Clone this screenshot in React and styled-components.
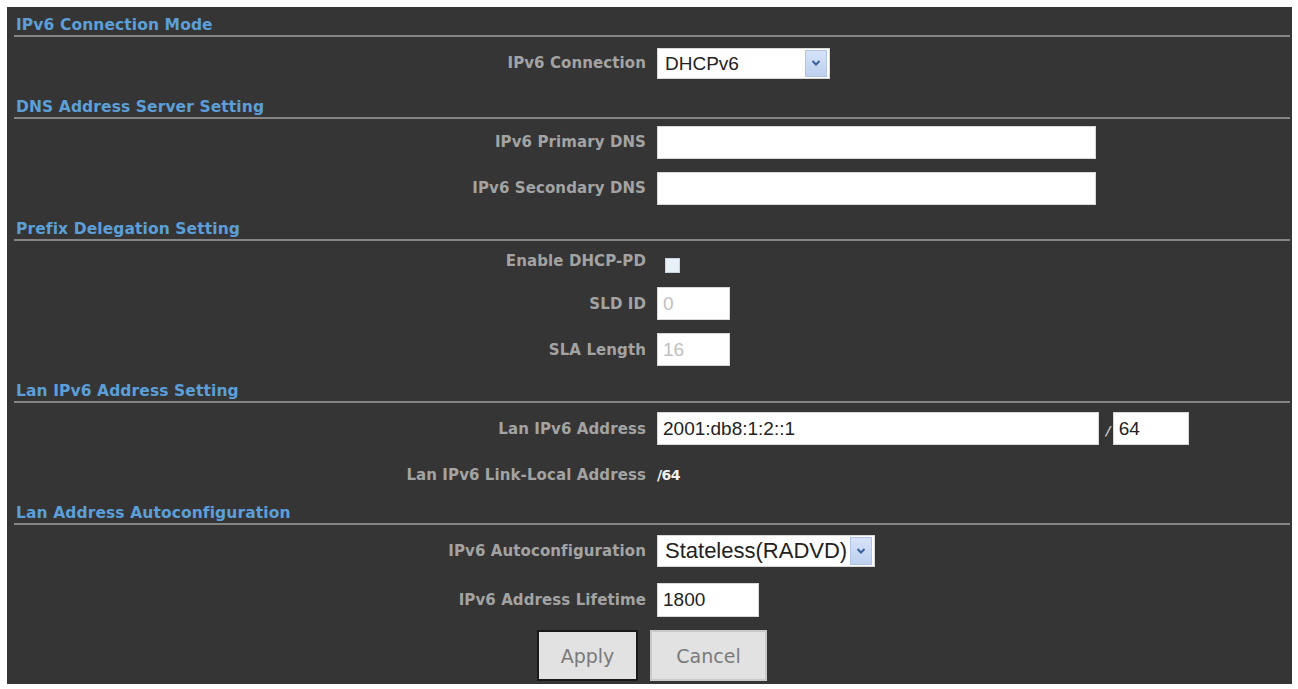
import React, { useState } from 'react';
import styled, { createGlobalStyle } from 'styled-components';

const GlobalStyle = createGlobalStyle`
  body {
    margin: 0;
    background: #ffffff;
    font-family: "DejaVu Sans", Verdana, sans-serif;
  }
`;

const Panel = styled.div`
  margin: 7px 6px 5px 7px;
  height: 677px;
  background-color: #353535;
  box-sizing: border-box;
  display: flex;
  flex-direction: column;
`;

const SectionTitle = styled.div`
  height: 30px;
  margin: 0 2px 0 7px;
  padding: 0 0 1px 2px;
  box-sizing: border-box;
  display: flex;
  align-items: flex-end;
  border-bottom: 2px solid #858585;
  color: #5c9fd8;
  font-weight: bold;
  font-size: 15.5px;
  letter-spacing: 0.1px;
`;

const Row = styled.div`
  display: grid;
  grid-template-columns: 639px auto;
  column-gap: 11px;
  align-items: center;
  height: ${props => props.h}px;
`;

const Label = styled.label`
  text-align: right;
  color: #a3a3a3;
  font-weight: bold;
  font-size: 15px;
  letter-spacing: 0.1px;
`;

const Controls = styled.div`
  display: flex;
  align-items: center;
`;

const TextInput = styled.input`
  width: ${props => props.w}px;
  height: ${props => props.h || 33}px;
  box-sizing: border-box;
  border: 1px solid #d8d8d8;
  background: #ffffff;
  padding: 0 5px;
  font-family: "Liberation Sans", Arial, sans-serif;
  font-size: 19px;
  color: ${props => (props.disabled ? '#c0c0c0' : '#222222')};
  outline: none;
  &:disabled {
    background: #ffffff;
  }
`;

const SelectWrap = styled.div`
  position: relative;
  width: ${props => props.w}px;
  height: ${props => props.h}px;
`;

const Select = styled.select`
  appearance: none;
  width: 100%;
  height: 100%;
  border: 1px solid #d8d8d8;
  background: #ffffff;
  padding: 0 4px 0 7px;
  font-family: "Liberation Sans", Arial, sans-serif;
  font-size: ${props => props.fs}px;
  color: #222222;
  outline: none;
`;

const Arrow = styled.span`
  position: absolute;
  top: 2px;
  right: 3px;
  bottom: 2px;
  width: 22px;
  background: linear-gradient(#d6e3f7, #bdd0ef);
  border: 1px solid #b0c4e6;
  box-sizing: border-box;
  display: flex;
  align-items: center;
  justify-content: center;
  pointer-events: none;
`;

const Checkbox = styled.span`
  display: inline-block;
  width: 15px;
  height: 15px;
  margin: 8px 0 0 8px;
  background: #e9f1f8;
  border: 1px solid #c8d4df;
  box-sizing: border-box;
`;

const Slash = styled.span`
  color: #c8c8c8;
  font-weight: bold;
  font-style: italic;
  font-size: 13px;
  margin: 4px 2px 0 7px;
`;

const Plain = styled.span`
  color: #f0f0f0;
  font-weight: bold;
  font-size: 14px;
  letter-spacing: -0.6px;
`;

const ButtonRow = styled.div`
  display: flex;
  justify-content: center;
  gap: 12px;
  padding-top: 6px;
  margin-left: 5px;
`;

const Button = styled.button`
  width: ${props => props.w}px;
  height: 51px;
  background: #e2e2e2;
  border: 2px solid ${props => (props.focused ? '#1a1a1a' : '#c9c9c9')};
  font-family: "DejaVu Sans", Verdana, sans-serif;
  font-size: 19px;
  color: #7a7a7a;
  cursor: pointer;
`;

const Chevron = () => (
  <svg width="10" height="8" viewBox="0 0 10 8">
    <path d="M1.5 2 L5 5.5 L8.5 2" fill="none" stroke="#3b5e9c" strokeWidth="2" />
  </svg>
);

const App = () => {
  const [conn, setConn] = useState('DHCPv6');
  const [auto, setAuto] = useState('Stateless(RADVD)');

  return (
    <>
      <GlobalStyle />
      <Panel>
        <SectionTitle>IPv6 Connection Mode</SectionTitle>
        <Row h={52}>
          <Label>IPv6 Connection</Label>
          <Controls>
            <SelectWrap w={173} h={31}>
              <Select fs={19} value={conn} onChange={e => setConn(e.target.value)}>
                <option>DHCPv6</option>
                <option>Static IPv6</option>
                <option>PPPoEv6</option>
              </Select>
              <Arrow><Chevron /></Arrow>
            </SelectWrap>
          </Controls>
        </Row>

        <SectionTitle>DNS Address Server Setting</SectionTitle>
        <Row h={46}>
          <Label>IPv6 Primary DNS</Label>
          <Controls><TextInput w={439} defaultValue="" /></Controls>
        </Row>
        <Row h={46}>
          <Label>IPv6 Secondary DNS</Label>
          <Controls><TextInput w={439} defaultValue="" /></Controls>
        </Row>

        <SectionTitle>Prefix Delegation Setting</SectionTitle>
        <Row h={40}>
          <Label>Enable DHCP-PD</Label>
          <Controls><Checkbox /></Controls>
        </Row>
        <Row h={45}>
          <Label>SLD ID</Label>
          <Controls><TextInput w={73} defaultValue="0" disabled /></Controls>
        </Row>
        <Row h={47}>
          <Label>SLA Length</Label>
          <Controls><TextInput w={73} defaultValue="16" disabled /></Controls>
        </Row>

        <SectionTitle>Lan IPv6 Address Setting</SectionTitle>
        <Row h={51}>
          <Label>Lan IPv6 Address</Label>
          <Controls>
            <TextInput w={442} defaultValue="2001:db8:1:2::1" />
            <Slash>/</Slash>
            <TextInput w={76} defaultValue="64" />
          </Controls>
        </Row>
        <Row h={41}>
          <Label>Lan IPv6 Link-Local Address</Label>
          <Controls><Plain>/64</Plain></Controls>
        </Row>

        <SectionTitle>Lan Address Autoconfiguration</SectionTitle>
        <Row h={51}>
          <Label>IPv6 Autoconfiguration</Label>
          <Controls>
            <SelectWrap w={218} h={32}>
              <Select fs={22} value={auto} onChange={e => setAuto(e.target.value)}>
                <option>Stateless(RADVD)</option>
                <option>Stateful(DHCPv6)</option>
              </Select>
              <Arrow><Chevron /></Arrow>
            </SelectWrap>
          </Controls>
        </Row>
        <Row h={48}>
          <Label>IPv6 Address Lifetime</Label>
          <Controls><TextInput w={102} h={34} defaultValue="1800" /></Controls>
        </Row>
        <ButtonRow>
          <Button w={101} focused>Apply</Button>
          <Button w={117}>Cancel</Button>
        </ButtonRow>
      </Panel>
    </>
  );
};

export default App;
